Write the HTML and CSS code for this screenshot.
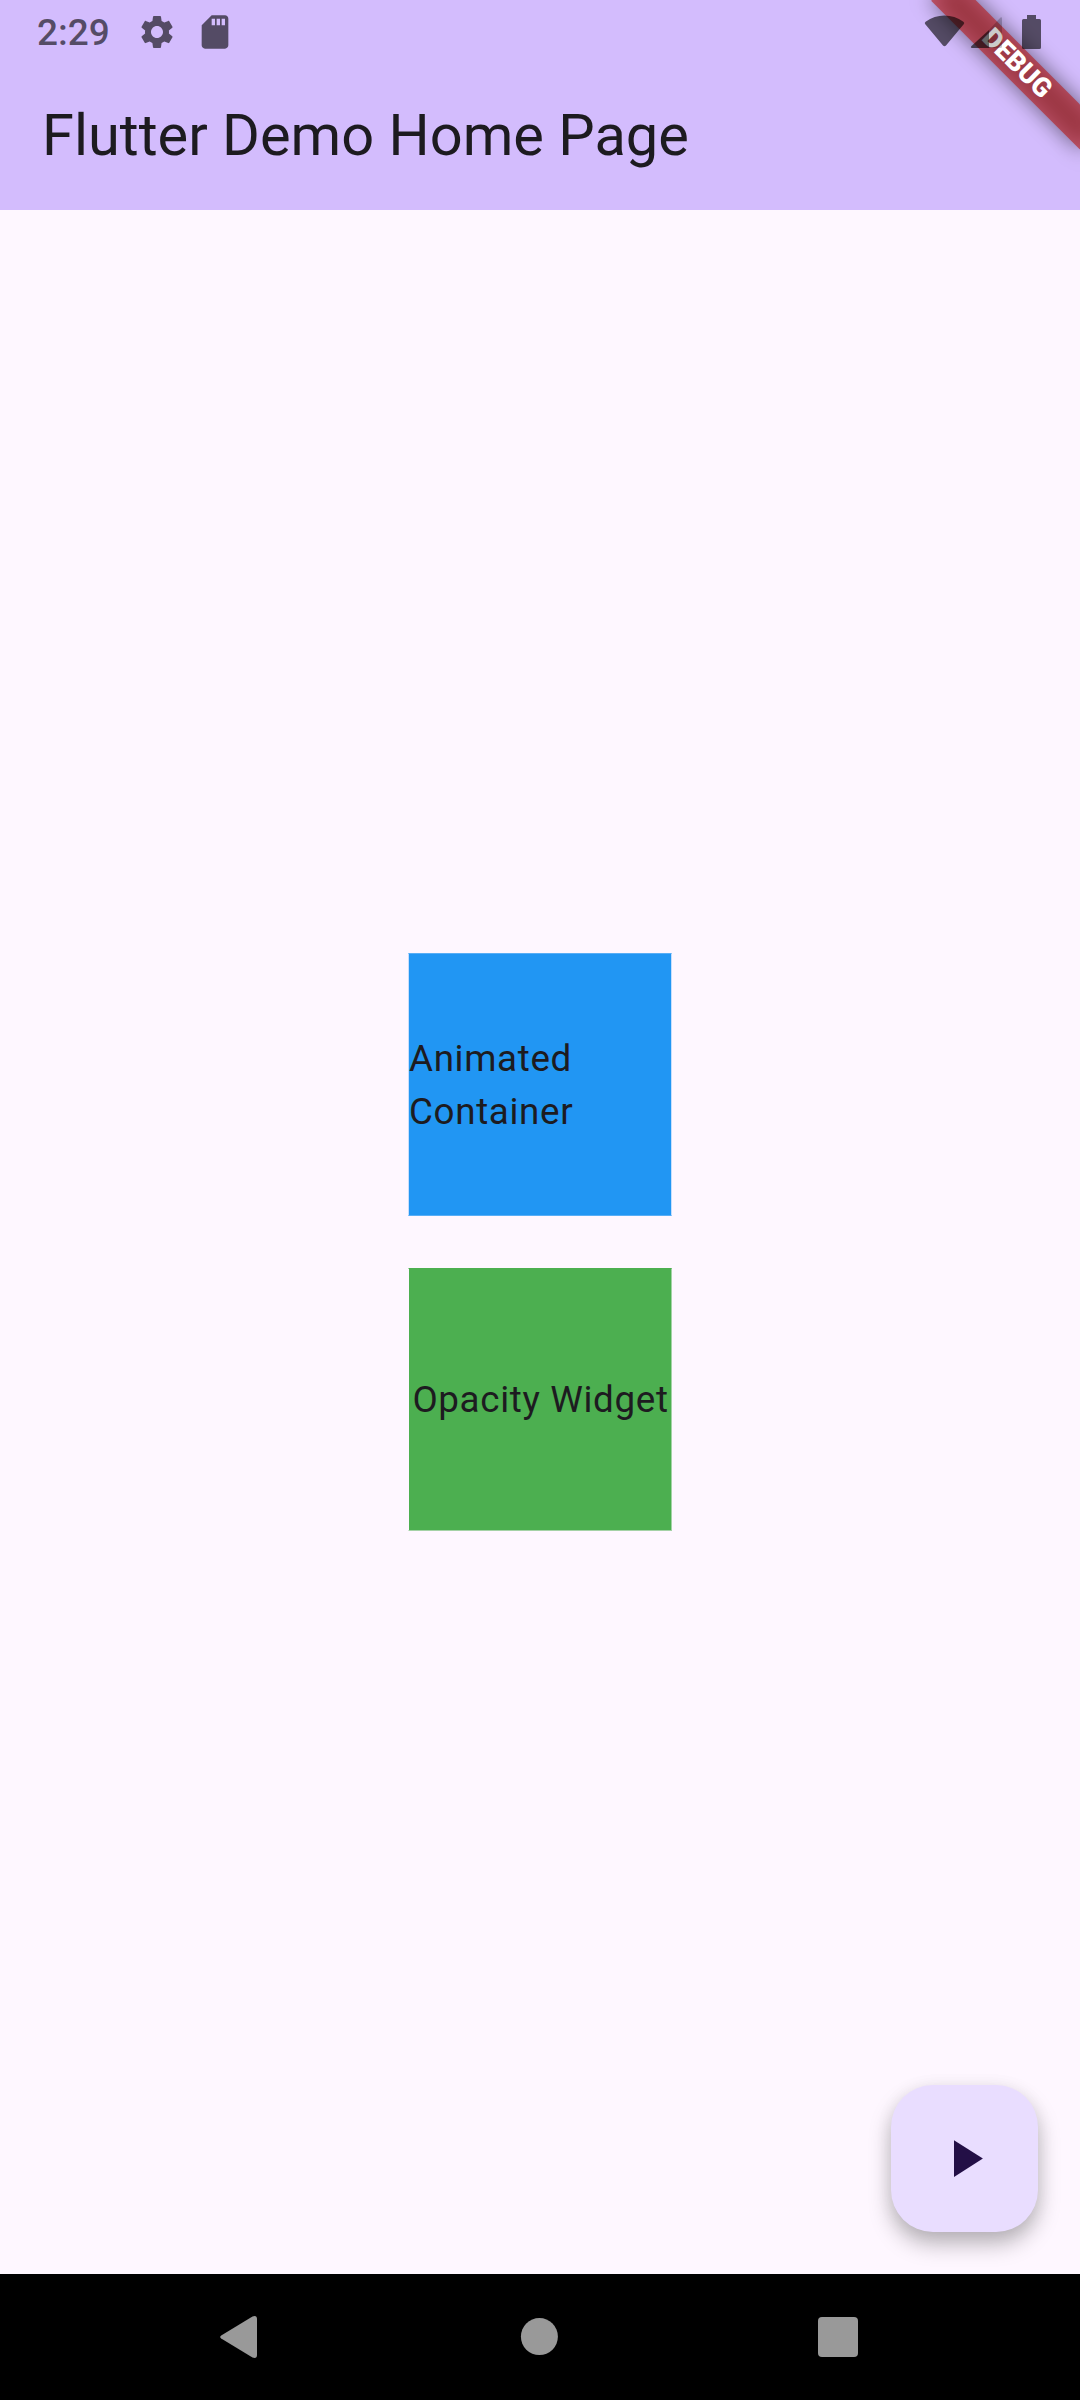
FILE: index.html
```
<!DOCTYPE html>
<html lang="en">
<head>
<meta charset="utf-8">
<title>Flutter Demo Home Page</title>
<link rel="stylesheet" href="styles.css">
</head>
<body>
<div class="screen">
  <header class="top">
    <div class="status">
      <span class="clock">2:29</span>
      <svg class="gear" width="40" height="40" viewBox="0 0 24 24"><path d="M19.14 12.94c.04-.3.06-.61.06-.94 0-.32-.02-.64-.07-.94l2.03-1.58c.18-.14.23-.41.12-.61l-1.92-3.32c-.12-.22-.37-.29-.59-.22l-2.39.96c-.5-.38-1.03-.7-1.62-.94l-.36-2.54c-.04-.24-.24-.41-.48-.41h-3.84c-.24 0-.43.17-.47.41l-.36 2.54c-.59.24-1.13.57-1.62.94l-2.39-.96c-.22-.08-.47 0-.59.22L2.74 8.87c-.12.21-.08.47.12.61l2.03 1.58c-.05.3-.09.63-.09.94s.02.64.07.94l-2.03 1.58c-.18.14-.23.41-.12.61l1.92 3.32c.12.22.37.29.59.22l2.39-.96c.5.38 1.03.7 1.62.94l.36 2.54c.05.24.24.41.48.41h3.84c.24 0 .44-.17.47-.41l.36-2.54c.59-.24 1.13-.56 1.62-.94l2.39.96c.22.08.47 0 .59-.22l1.92-3.32c.12-.22.07-.47-.12-.61l-2.01-1.58zM12 15.6c-1.98 0-3.6-1.62-3.6-3.6s1.62-3.6 3.6-3.6 3.6 1.62 3.6 3.6-1.62 3.6-3.6 3.6z"/></svg>
      <svg class="card" width="40" height="40" viewBox="0 0 24 24"><path d="M18 2h-8L4.02 8 4 20c0 1.1.9 2 2 2h12c1.1 0 2-.9 2-2V4c0-1.100-.9-2-2-2zm-6 6h-2V4h2v4zm3 0h-2V4h2v4zm3 0h-2V4h2v4z"/></svg>
      <svg class="signals" width="120" height="40" viewBox="922 11 120 40">
        <path d="M925.300 23.300Q924 21.800 925.600 20.800C937 12.500 952 12.500 963.400 20.800Q965 21.800 963.700 23.300L946 44.500Q944.500 46 943 44.500Z"/>
        <path d="M989 29V47H972Q970 46.500 971.500 45Z"/>
        <path fill-opacity=".34" d="M989 29L1000.500 16.500Q1002 15.500 1002 17.500V45.500Q1002 47 1000.500 47H989Z"/>
        <path d="M1027 14h9v4h3.500q1.500 0 1.500 1.500V46.500q0 1.500-1.500 1.500h-16q-1.500 0-1.500-1.500V19.500q0-1.500 1.500-1.500h3.500z"/>
      </svg>
    </div>
    <h1 class="title">Flutter Demo Home Page</h1>
  </header>
  <main class="content">
    <div class="box blue">Animated Container</div>
    <div class="box green">Opacity Widget</div>
    <button class="fab" aria-label="Play">
      <svg width="63" height="63" viewBox="0 0 24 24"><path d="M8 5v14l11-7z"/></svg>
    </button>
  </main>
  <nav class="nav">
    <svg width="38" height="44" viewBox="0 0 38 44"><path d="M1.200 20.600L32.500 1.500Q37 0 37 4V40Q37 44 32.500 42.500L1.200 23.400Q-.8 22 1.200 20.600Z"/></svg>
    <svg width="38" height="38" viewBox="0 0 38 38"><circle cx="20.400" cy="18.600" r="18.500"/></svg>
    <svg width="40" height="40" viewBox="0 0 40 40"><rect width="40" height="40" rx="4"/></svg>
  </nav>
  <div class="banner">
    <div class="banner-shadow"></div>
    <div class="banner-strip">DEBUG</div>
  </div>
</div>
</body>
</html>
```
FILE: styles.css
```
body {
  margin: 0;
  font-family: Roboto, sans-serif;
  color: #1d1b20;
}

.screen {
  position: relative;
  display: flex;
  flex-direction: column;
  width: 1080px;
  height: 2400px;
  overflow: hidden;
  background: #fef7ff;
}

.top {
  height: 210px;
  background: #d3bcfd;
}

.status {
  position: relative;
  z-index: 2;
  display: flex;
  align-items: center;
  box-sizing: border-box;
  height: 63px;
  padding: 0 38px 0 37px;
  color: rgba(0, 0, 0, 0.6);
}

.status svg {
  fill: rgba(0, 0, 0, 0.6);
}

.clock {
  width: 100px;
  padding-top: 2px;
  font-size: 37px;
  font-weight: 500;
  line-height: 61px;
}

.card {
  margin-left: 18px;
}

.signals {
  margin-left: auto;
}

.title {
  margin: 0;
  padding-left: 42px;
  font-size: 57.75px;
  font-weight: 400;
  line-height: 145px;
}

.content {
  position: relative;
  flex: 1;
  display: flex;
  flex-direction: column;
  align-items: center;
  justify-content: center;
  gap: 52px;
}

.box {
  display: flex;
  align-items: center;
  box-sizing: border-box;
  width: 264px;
  height: 263px;
  padding-top: 2px;
  border: 1px solid transparent;
  background-clip: padding-box;
  font-size: 36.75px;
  line-height: 52.5px;
  letter-spacing: 0.656px;
}

.blue {
  background-color: #2196f3;
  border-color: rgba(33, 150, 243, 0.75) rgba(33, 150, 243, 0.25);
}

.green {
  justify-content: center;
  padding-left: 1px;
  background-color: #4caf50;
  border-color: #4caf50 rgba(76, 175, 80, 0.5) rgba(76, 175, 80, 0.5) transparent;
  white-space: nowrap;
}

.fab {
  position: absolute;
  right: 42px;
  bottom: 42px;
  display: flex;
  align-items: center;
  justify-content: center;
  width: 147px;
  height: 147px;
  padding: 0;
  border: 0;
  border-radius: 42px;
  background: #e9ddff;
  box-shadow: 0 12px 22px rgba(0, 0, 0, 0.27), 0 2px 18px rgba(0, 0, 0, 0.06);
}

.fab svg {
  fill: #230f46;
}

.nav {
  display: flex;
  align-items: center;
  box-sizing: border-box;
  height: 126px;
  padding: 0 222px 0 220px;
  justify-content: space-between;
  background: #000;
}

.nav svg {
  fill: #999;
  overflow: visible;
}

/* Corner ribbon, rotated about the top right corner of the screen. */
.banner {
  position: absolute;
  top: 73.5px;
  left: 975px;
  z-index: 1;
  width: 210px;
  height: 31.5px;
  transform: rotate(45deg);
  transform-origin: 105px -73.5px;
}

.banner-shadow {
  position: absolute;
  inset: 0;
  background: rgba(0, 0, 0, 0.5);
  filter: blur(10.4px);
}

.banner-strip {
  position: absolute;
  inset: 0;
  background: rgba(183, 28, 28, 0.627);
  color: #fff;
  font-size: 26.775px;
  font-weight: 900;
  line-height: 31.5px;
  text-align: center;
}
```
